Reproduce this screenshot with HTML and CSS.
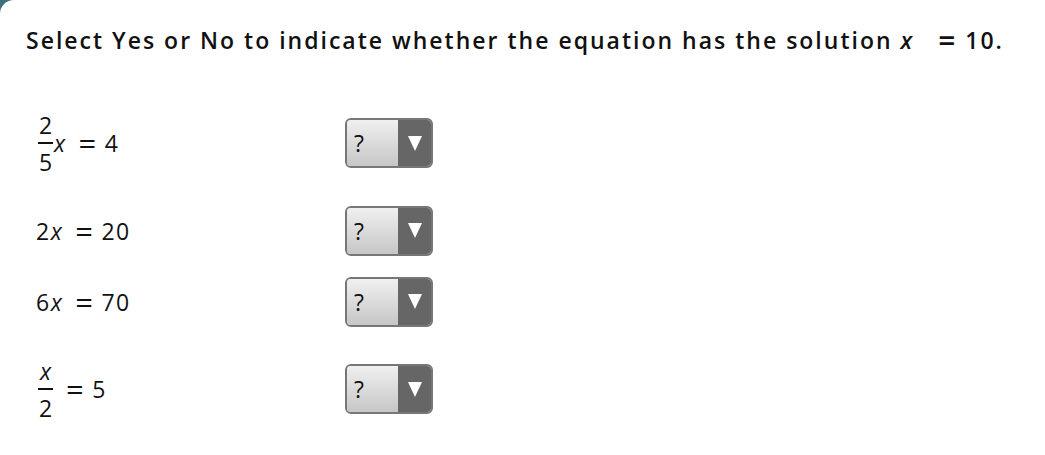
FILE: index.html
```html
<!DOCTYPE html>
<html lang="en">
<head>
    <meta charset="UTF-8">
    <title>Select Yes or No</title>
    <link rel="stylesheet" href="styles.css">
</head>
<body>
    <div class="page">
        <p class="prompt">Select Yes or No to indicate whether the equation has the solution <i>x</i><span class="op">=</span>10.</p>

        <div class="rows">
            <div class="row tall">
                <div class="eq">
                    <span class="frac"><span>2</span><span class="bar"></span><span>5</span></span><i>x</i><span class="op">=</span>4
                </div>
                <div class="select">
                    <span class="value">?</span>
                    <span class="arrow"></span>
                </div>
            </div>

            <div class="row">
                <div class="eq">2<i>x</i><span class="op">=</span>20</div>
                <div class="select">
                    <span class="value">?</span>
                    <span class="arrow"></span>
                </div>
            </div>

            <div class="row">
                <div class="eq">6<i>x</i><span class="op">=</span>70</div>
                <div class="select">
                    <span class="value">?</span>
                    <span class="arrow"></span>
                </div>
            </div>

            <div class="row tall">
                <div class="eq">
                    <span class="frac"><i>x</i><span class="bar"></span><span>2</span></span><span class="op">=</span>5
                </div>
                <div class="select">
                    <span class="value">?</span>
                    <span class="arrow"></span>
                </div>
            </div>
        </div>
    </div>
</body>
</html>
```

FILE: styles.css
```css
body {
    margin: 0;
    background: #3f6f7a;
    font-family: "Open Sans", "DejaVu Sans", sans-serif;
    color: #111;
}

.page {
    background: white;
    min-height: 100vh;
    border-top-left-radius: 14px;
    overflow: hidden;
}

.prompt {
    margin: 25px 0 0 26px;
    font-size: 23px;
    line-height: 30px;
    font-weight: 600;
    letter-spacing: 2px;
}

.prompt .op {
    display: inline-block;
    font-size: 30px;
    line-height: 20px;
    vertical-align: -3px;
    margin: 0 8px 0 24px;
}

.rows {
    margin-top: 36px;
    padding-left: 36px;
}

.row {
    display: flex;
    align-items: center;
    height: 71px;
}

.row.tall {
    height: 104px;
}

.eq {
    width: 309px;
    display: flex;
    align-items: center;
    font-size: 23px;
    font-weight: 500;
    letter-spacing: 1.5px;
}

.eq .op {
    font-size: 31px;
    line-height: 24px;
    margin: 0 7px 0 12px;
}

.frac {
    display: inline-flex;
    flex-direction: column;
    align-items: center;
    margin: 0 1px 0 2px;
    line-height: 24px;
    letter-spacing: 0;
}

.frac .bar {
    width: 15px;
    height: 2px;
    margin: 5px 0 6px;
    background: #111;
}

.select {
    width: 84px;
    height: 46px;
    display: flex;
    border: 2px solid #777;
    border-radius: 6px;
    overflow: hidden;
}

.select .value {
    flex: 1;
    padding-left: 7px;
    font-size: 23px;
    line-height: 46px;
    background: linear-gradient(to bottom, #f0f0f0, #c6c6c6);
}

.select .arrow {
    width: 33px;
    background: #666;
    display: flex;
    align-items: center;
    justify-content: center;
}

.select .arrow::after {
    content: "";
    border-left: 7px solid transparent;
    border-right: 7px solid transparent;
    border-top: 15px solid white;
}
```
